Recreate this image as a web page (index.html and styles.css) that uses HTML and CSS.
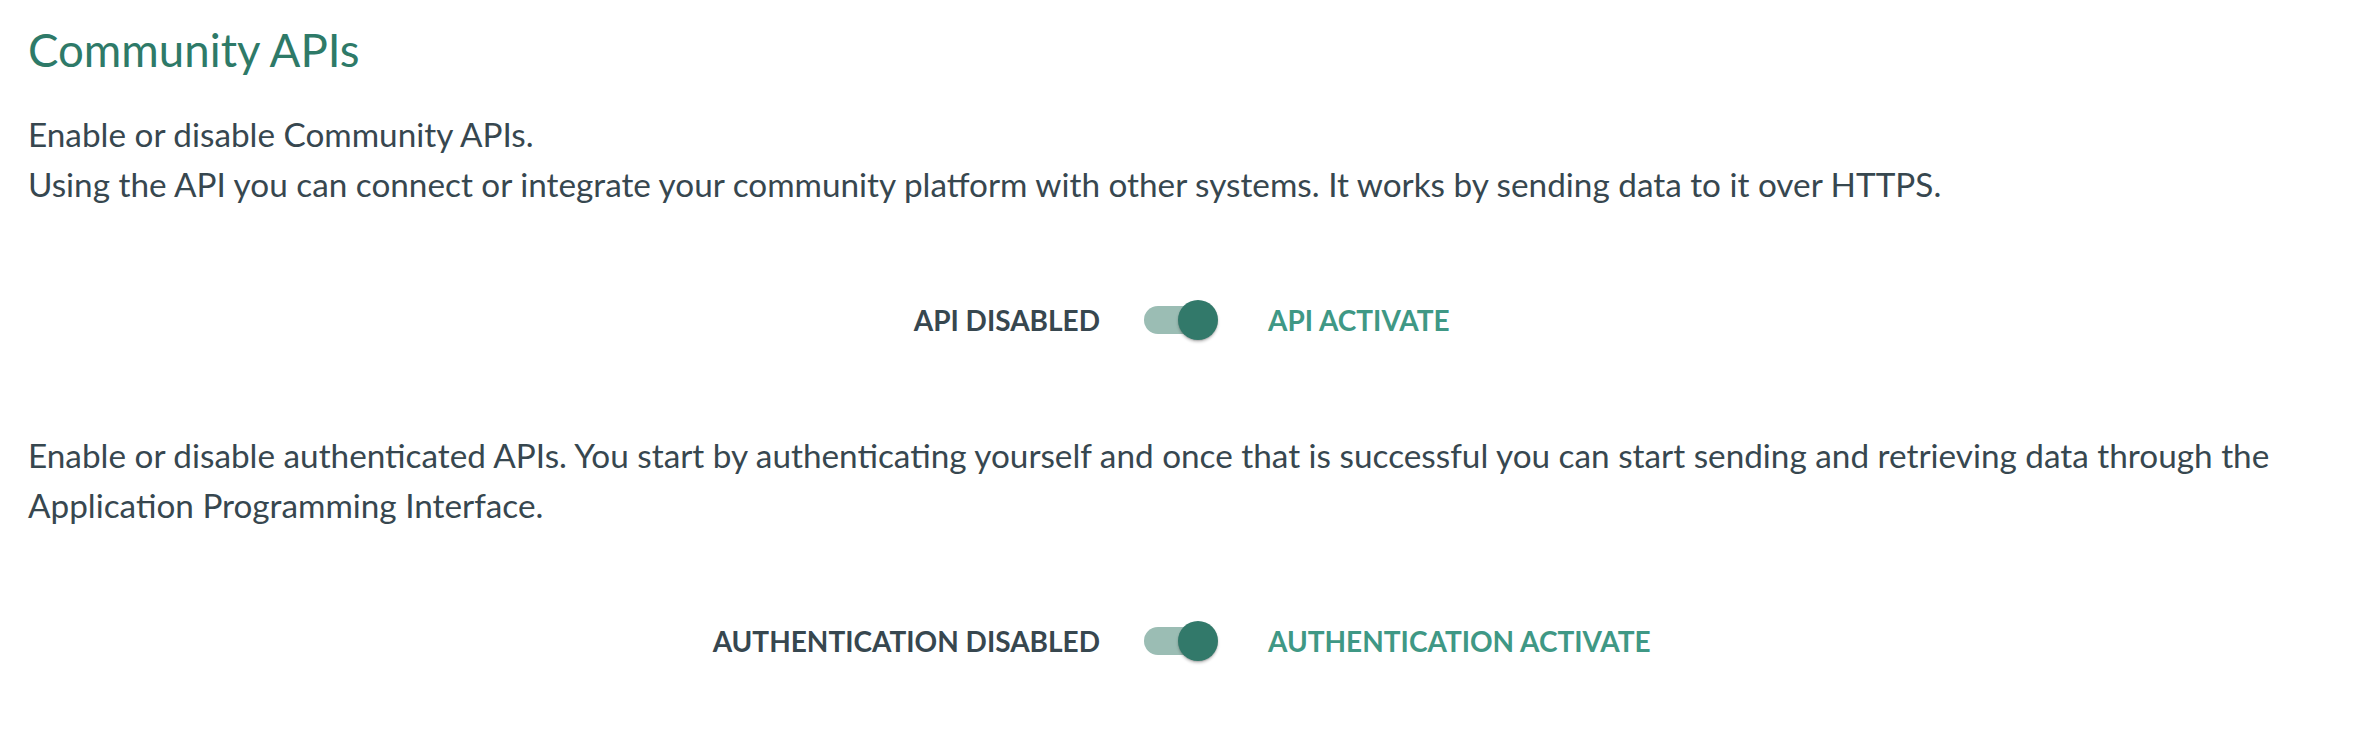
FILE: index.html
```html
<!DOCTYPE html>
<html lang="en">
<head>
<meta charset="utf-8">
<title>Community APIs</title>
<link rel="stylesheet" href="styles.css">
</head>
<body>
<main class="page">
  <h1 class="title">Community APIs</h1>
  <p class="desc">Enable or disable Community APIs.<br>Using the API you can connect or integrate your community platform with other systems. It works by sending data to it over HTTPS.</p>
  <div class="switch-row">
    <span class="label label-off">API DISABLED</span>
    <span class="switch" role="switch" aria-checked="true"><span class="track"></span><span class="knob"></span></span>
    <span class="label label-on">API ACTIVATE</span>
  </div>
  <p class="desc">Enable or disable authenticated APIs. You start by authenticating yourself and once that is successful you can start sending and retrieving data through the Application Programming Interface.</p>
  <div class="switch-row">
    <span class="label label-off">AUTHENTICATION DISABLED</span>
    <span class="switch" role="switch" aria-checked="true"><span class="track"></span><span class="knob"></span></span>
    <span class="label label-on">AUTHENTICATION ACTIVATE</span>
  </div>
</main>
</body>
</html>
```
FILE: styles.css
```css
html, body {
  margin: 0;
  padding: 0;
  background: #ffffff;
}

.page {
  padding: 0 28px;
  font-family: Lato, "Source Sans Pro", "Noto Sans", sans-serif;
  color: #37474f;
}

.title {
  margin: 22px 0 31px;
  font-size: 45.6px;
  font-weight: 400;
  line-height: 56px;
  color: #2e7a68;
}

.desc {
  margin: 0;
  font-size: 33.3px;
  line-height: 50px;
}

.switch-row {
  display: grid;
  grid-template-columns: 1fr auto 1fr;
  align-items: center;
  column-gap: 44px;
  height: 60px;
  margin: 81px 0 80px;
}

.label {
  font-size: 28px;
  font-weight: 700;
  letter-spacing: 0;
}

.label-off {
  justify-self: end;
  color: #37474f;
}

.label-on {
  justify-self: start;
  padding-left: 6px;
  color: #3f9885;
}

.switch {
  position: relative;
  display: block;
  width: 74px;
  height: 40px;
}

.track {
  position: absolute;
  left: 0;
  top: 6px;
  width: 66px;
  height: 28px;
  border-radius: 14px;
  background: #9bbdb4;
}

.knob {
  position: absolute;
  right: 0;
  top: 0;
  width: 40px;
  height: 40px;
  border-radius: 50%;
  background: #32796a;
  box-shadow: 0 2px 3px rgba(0, 0, 0, 0.22), 0 1px 1px rgba(0, 0, 0, 0.12);
}
```
